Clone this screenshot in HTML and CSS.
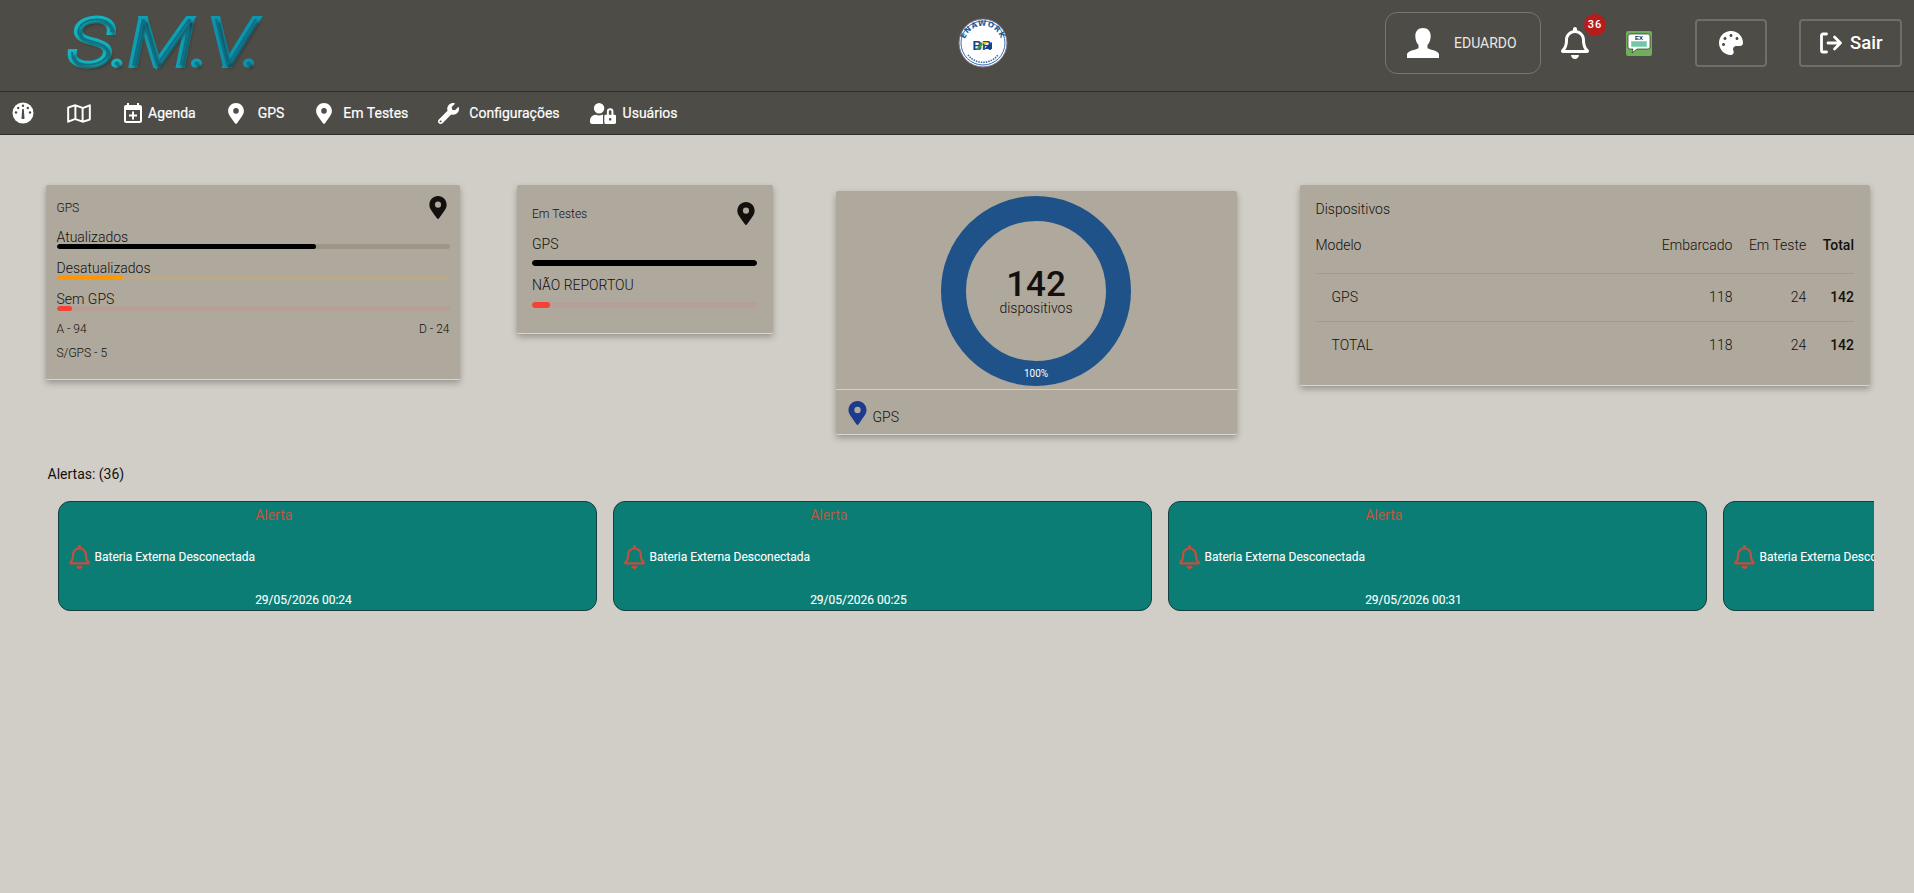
FILE: index.html
```html
<!DOCTYPE html>
<html lang="pt-BR">
<head>
<meta charset="utf-8">
<title>S.M.V.</title>
<link rel="stylesheet" href="styles.css">
</head>
<body>
<svg class="sprites" width="0" height="0" aria-hidden="true">
  <symbol id="pin" viewBox="0 0 384 512"><path fill-rule="evenodd" d="M172.268 501.67C26.97 291.031 0 268.413 0 192 0 85.961 85.961 0 192 0s192 85.961 192 192c0 76.413-26.97 99.031-172.268 309.67-9.535 13.774-29.93 13.773-39.464 0zM192 124a68 68 0 1 0 0 136 68 68 0 0 0 0-136z"/></symbol>
  <symbol id="bell" viewBox="0 0 448 512"><path d="M439.39 362.29c-19.32-20.76-55.47-51.99-55.47-154.29 0-77.7-54.48-139.9-127.94-155.16V32c0-17.67-14.32-32-31.98-32s-31.98 14.33-31.98 32v20.84C118.56 68.1 64.08 130.3 64.08 208c0 102.3-36.15 133.53-55.47 154.29-6 6.45-8.66 14.16-8.61 21.71.11 16.4 12.98 32 32.1 32h383.8c19.12 0 32-15.6 32.1-32 .05-7.55-2.61-15.27-8.61-21.71zM67.53 368c21.22-27.97 44.42-74.33 44.53-159.42 0-.2-.06-.38-.06-.58 0-61.86 50.14-112 112-112s112 50.14 112 112c0 .2-.06.38-.06.58.11 85.1 23.31 131.46 44.53 159.42H67.53zM224 512c35.32 0 63.97-28.65 63.97-64H160.03c0 35.35 28.65 64 63.97 64z"/></symbol>
</svg>

<header class="topbar">
  <div class="logo"><span class="l1">S.</span><span class="l2">M.</span><span class="l3">V.</span></div>
  <svg class="brand" viewBox="0 0 50 50" aria-label="Enawork">
    <circle cx="25" cy="25" r="24" fill="#fff" stroke="#7d6f86" stroke-width="1"/>
    <circle cx="25" cy="25" r="22" fill="none" stroke="#2f6fb0" stroke-width="1"/>
    <path id="arc" d="M6.500 30A18.800 18.800 0 1 1 43.500 30" fill="none"/>
    <text class="brand-arc"><textPath href="#arc" startOffset="50%" text-anchor="middle">ENAWORK</textPath></text>
    <text x="24" y="32" class="brand-br">BR</text>
    <path d="M26 31l8-7v7z" fill="#17428c"/>
    <path d="M18 32l5-8 2 2-4 6z" fill="#2f9a3f"/>
    <path d="M24 24l3 3 3-3z" fill="#e8c52a"/>
    <path d="M10 37a19 19 0 0 0 30 0" fill="none" stroke="#2f6fb0" stroke-width="1.600" stroke-dasharray="1.500 1"/>
  </svg>
  <div class="top-actions">
    <div class="user-box">
      <svg class="user-icon" viewBox="0 0 32 30" fill="#fff"><path d="M16 0c5 0 7.700 3.300 7.700 8 0 3.500-1.100 6.800-3.200 9v3.200c2.800 1.600 11.500 2.600 11.500 6.300V30H0v-3.500c0-3.700 8.700-4.700 11.500-6.300V17c-2.100-2.200-3.200-5.500-3.200-9 0-4.700 2.700-8 7.700-8z"/></svg>
      <span>EDUARDO</span>
    </div>
    <div class="notify">
      <svg class="bell-top" fill="#fff"><use href="#bell"/></svg>
      <span class="badge">36</span>
    </div>
    <svg class="chat-app" viewBox="0 0 26 25">
      <rect width="26" height="25" rx="2" fill="#6fae5a"/>
      <path d="M4 3h18a2 2 0 0 1 2 2v11a2 2 0 0 1-2 2H11l-5 4 1-4H4a2 2 0 0 1-2-2V5a2 2 0 0 1 2-2z" fill="#fff" stroke="#25331f" stroke-width=".7"/>
      <text x="13" y="9" class="chat-ex">EX</text>
      <rect x="5" y="10" width="16" height="6" fill="#8fd8b8"/>
      <path d="M7 11v4M9 11v4M11 11v4M13 11v4M15 11v4M17 11v4M19 11v4" stroke="#3d9c78" stroke-width=".6"/>
    </svg>
    <button class="outline-btn palette-btn" type="button">
      <svg class="palette" viewBox="0 0 512 512" fill="#fff"><path d="M204.3 5C104.9 24.4 24.8 104.3 5.2 203.4c-37 187 131.7 326.4 258.8 306.7 41.2-6.4 61.4-54.6 42.5-91.7-23.100-45.4 9.900-98.400 60.900-98.400h79.700c35.800 0 64.800-29.600 64.900-65.300C511.500 97.100 368.100-26.900 204.300 5zM96 320c-17.700 0-32-14.300-32-32s14.300-32 32-32 32 14.300 32 32-14.300 32-32 32zm32-128c-17.700 0-32-14.300-32-32s14.300-32 32-32 32 14.300 32 32-14.300 32-32 32zm128-64c-17.700 0-32-14.300-32-32s14.300-32 32-32 32 14.300 32 32-14.300 32-32 32zm128 64c-17.700 0-32-14.300-32-32s14.300-32 32-32 32 14.300 32 32-14.300 32-32 32z"/></svg>
    </button>
    <button class="outline-btn exit-btn" type="button">
      <svg class="exit" viewBox="0 0 24 24" fill="none" stroke="#fff" stroke-width="2.800" stroke-linecap="round" stroke-linejoin="round"><path d="M8 3H4.500A1.500 1.500 0 0 0 3 4.500v15A1.500 1.500 0 0 0 4.500 21H8"/><path d="M9.500 12H22M16 6l6 6-6 6"/></svg>
      <span>Sair</span>
    </button>
  </div>
</header>

<nav class="navbar">
  <a class="nav-item nav-dash"><svg class="ni-dash" viewBox="0 0 22 22"><circle cx="11" cy="11" r="10.500" fill="#fff"/><g fill="#4d4c46"><circle cx="11" cy="3.800" r="1.200"/><circle cx="6.200" cy="6" r="1.200"/><circle cx="15.800" cy="6" r="1.200"/><circle cx="4" cy="10.500" r="1.200"/><circle cx="18" cy="10.500" r="1.200"/><path d="M10.200 7h1.600l.6 8a1.500 1.500 0 1 1-2.800 0z"/></g></svg></a>
  <a class="nav-item nav-map"><svg class="ni-map" viewBox="0 0 576 512" fill="#fff"><path d="M560.020 32c-1.960 0-3.980.370-5.960 1.160L384.010 96H384L212 35.280A64.252 64.252 0 0 0 191.760 32c-6.690 0-13.370 1.050-19.810 3.140L20.120 87.950A32.006 32.006 0 0 0 0 117.660v346.320C0 473.170 7.530 480 15.990 480c1.960 0 3.970-.370 5.960-1.160L192 416l172 60.710a63.980 63.980 0 0 0 40.050.150l151.830-52.810A31.996 31.996 0 0 0 576 394.340V48.020c0-9.190-7.530-16.020-15.980-16.020zM224 90.420l128 45.190v285.970l-128-45.190V90.420zM48 418.050V129.070l128-44.530v286.200l-.640.230L48 418.050zm480-35.130l-128 44.530V141.260l.640-.240L528 93.950v288.970z"/></svg></a>
  <a class="nav-item nav-agenda"><svg class="ni-cal" viewBox="3 1 18 20" fill="#fff"><path d="M19 19V8H5V19H19M16 1H18V3H19C20.110 3 21 3.900 21 5V19C21 20.110 20.110 21 19 21H5C3.890 21 3 20.100 3 19V5C3 3.890 3.900 3 5 3H6V1H8V3H16V1M11 9.500H13V12.500H16V14.500H13V17.500H11V14.500H8V12.500H11V9.500Z"/></svg><span>Agenda</span></a>
  <a class="nav-item nav-gps"><svg class="ni-pin" fill="#fff"><use href="#pin"/></svg><span>GPS</span></a>
  <a class="nav-item nav-test"><svg class="ni-pin" fill="#fff"><use href="#pin"/></svg><span>Em Testes</span></a>
  <a class="nav-item nav-conf"><svg class="ni-wrench" viewBox="0 0 512 512" fill="#fff"><path d="M507.730 109.100c-2.240-9.030-13.540-12.090-20.120-5.510l-74.360 74.360-67.880-11.310-11.310-67.880 74.360-74.360c6.620-6.620 3.430-17.900-5.660-20.160-47.380-11.740-99.550.910-136.580 37.930-39.640 39.640-50.550 97.100-34.050 147.200L18.740 402.760c-24.990 24.990-24.990 65.510 0 90.500 24.990 24.990 65.510 24.990 90.500 0l213.210-213.210c50.120 16.710 107.470 5.680 147.370-34.220 37.070-37.070 49.700-89.320 37.910-136.730zM64 472c-13.250 0-24-10.750-24-24 0-13.260 10.750-24 24-24s24 10.740 24 24c0 13.250-10.750 24-24 24z"/></svg><span>Configurações</span></a>
  <a class="nav-item nav-users"><svg class="ni-lock" viewBox="0 0 640 512" fill="#fff"><path d="M224 256A128 128 0 1 0 96 128a128 128 0 0 0 128 128zm96 64a63.080 63.080 0 0 1 8.100-30.500c-4.800-.500-9.500-1.500-14.500-1.500h-16.700a174.080 174.080 0 0 1-145.800 0h-16.700A134.430 134.430 0 0 0 0 422.400V464a48 48 0 0 0 48 48h280.900a63.540 63.540 0 0 1-8.900-32zm288-32h-32v-80a80 80 0 0 0-160 0v80h-32a32 32 0 0 0-32 32v160a32 32 0 0 0 32 32h224a32 32 0 0 0 32-32V320a32 32 0 0 0-32-32zM496 432a32 32 0 1 1 32-32 32 32 0 0 1-32 32zm32-144h-64v-80a32 32 0 0 1 64 0z"/></svg><span>Usuários</span></a>
</nav>

<main class="content">
  <section class="cards">
    <article class="card card-gps">
      <div class="card-head"><span class="small">GPS</span><svg class="pin-card" fill="#14100d"><use href="#pin"/></svg></div>
      <div class="metric metric-a"><span>Atualizados</span><div class="track track-black"><i class="fill fill-black" style="width:66%"></i></div></div>
      <div class="metric"><span>Desatualizados</span><div class="track track-orange"><i class="fill fill-orange" style="width:17%"></i></div></div>
      <div class="metric"><span>Sem GPS</span><div class="track track-red"><i class="fill fill-red" style="width:4%"></i></div></div>
      <div class="legend small"><span>A - 94</span><span>D - 24</span></div>
      <div class="legend-2 small">S/GPS - 5</div>
    </article>

    <article class="card card-test">
      <div class="card-head"><span class="small">Em Testes</span><svg class="pin-card" fill="#14100d"><use href="#pin"/></svg></div>
      <div class="test-metric"><span>GPS</span><div class="track track-black"><i class="fill fill-black" style="width:100%"></i></div></div>
      <div class="test-metric test-metric-b"><span>NÃO REPORTOU</span><div class="track track-red"><i class="fill fill-red" style="width:8%"></i></div></div>
    </article>

    <article class="card card-donut">
      <div class="donut-wrap">
        <svg class="donut" viewBox="0 0 190 190">
          <circle cx="95" cy="95" r="82.500" fill="none" stroke="#1f5288" stroke-width="25"/>
          <text x="95" y="100" class="donut-num">142</text>
          <text x="95" y="117" class="donut-label">dispositivos</text>
          <text x="95" y="181" class="donut-pct">100%</text>
        </svg>
      </div>
      <div class="donut-legend"><svg class="pin-legend" fill="#1e3a8f"><use href="#pin"/></svg><span>GPS</span></div>
    </article>

    <article class="card card-table">
      <div class="table-title">Dispositivos</div>
      <table class="devices">
        <thead><tr><th class="col-name">Modelo</th><th>Embarcado</th><th>Em Teste</th><th class="strong">Total</th></tr></thead>
        <tbody>
          <tr><td class="col-name">GPS</td><td>118</td><td>24</td><td class="strong">142</td></tr>
          <tr><td class="col-name">TOTAL</td><td>118</td><td>24</td><td class="strong">142</td></tr>
        </tbody>
      </table>
    </article>
  </section>

  <h2 class="alerts-title">Alertas: (36)</h2>
  <section class="alerts">
    <article class="alert">
      <div class="alert-title">Alerta</div>
      <div class="alert-msg"><svg class="alert-bell"><use href="#bell"/></svg><span>Bateria Externa Desconectada</span></div>
      <div class="alert-date">29/05/2026 00:24</div>
    </article>
    <article class="alert">
      <div class="alert-title">Alerta</div>
      <div class="alert-msg"><svg class="alert-bell"><use href="#bell"/></svg><span>Bateria Externa Desconectada</span></div>
      <div class="alert-date">29/05/2026 00:25</div>
    </article>
    <article class="alert">
      <div class="alert-title">Alerta</div>
      <div class="alert-msg"><svg class="alert-bell"><use href="#bell"/></svg><span>Bateria Externa Desconectada</span></div>
      <div class="alert-date">29/05/2026 00:31</div>
    </article>
    <article class="alert">
      <div class="alert-title">Alerta</div>
      <div class="alert-msg"><svg class="alert-bell"><use href="#bell"/></svg><span>Bateria Externa Desconectada</span></div>
      <div class="alert-date">29/05/2026 00:36</div>
    </article>
  </section>
</main>
</body>
</html>
```

FILE: styles.css
```css
* { box-sizing: border-box; }
html, body { margin: 0; height: 100%; }
body {
  background: #d1cec7;
  color: #14100d;
  font-family: Roboto, "Liberation Sans", sans-serif;
  font-size: 14px;
  overflow: hidden;
}
.sprites { position: absolute; }

/* top bar */
.topbar {
  height: 92px;
  background: #4d4c46;
  border-bottom: 1px solid #2e2e2a;
  display: flex;
  align-items: center;
  padding-bottom: 5px;
  position: relative;
}
.logo {
  margin-left: 69px;
  width: 195px;
  font-family: Roboto, sans-serif;
  font-weight: 100;
  font-style: italic;
  font-size: 65px;
  line-height: 64px;
  color: #0d6f86;
  text-shadow: 2px 3px 3px #1b1f20;
  white-space: nowrap;
  transform: scaleX(1.18);
  transform-origin: left center;
}
.logo span { -webkit-text-stroke: 6px #13b4bf; paint-order: stroke fill; }
.logo .l2 { -webkit-text-stroke-color: #0f9fb4; }
.logo .l3 { -webkit-text-stroke-color: #0d94ae; }
.brand {
  width: 50px;
  height: 50px;
  margin-left: 694px;
}
.brand-arc { font: 700 7.500px "DejaVu Sans", sans-serif; fill: #1c5c9a; letter-spacing: .6px; }
.brand-br { font: 700 13px "Liberation Sans", sans-serif; fill: #17428c; text-anchor: middle; }
.top-actions {
  margin-left: auto;
  padding-right: 12px;
  display: flex;
  align-items: center;
}
.user-box {
  width: 156px;
  height: 62px;
  border: 1px solid #77766f;
  border-radius: 12px;
  display: flex;
  align-items: center;
  padding-left: 21px;
  color: #e8e8e4;
  font-size: 14px;
}
.user-icon { width: 32px; height: 30px; margin-right: 15px; }
.notify { position: relative; width: 28px; height: 32px; margin-left: 20px; }
.bell-top { width: 28px; height: 32px; display: block; }
.badge {
  position: absolute;
  left: 23px;
  top: -13px;
  width: 22px;
  height: 22px;
  border-radius: 50%;
  background: #b71c1c;
  color: #fff;
  font-size: 11px;
  font-weight: 500;
  letter-spacing: 1px;
  line-height: 22px;
  text-align: center;
}
.chat-app { width: 26px; height: 25px; margin-left: 37px; }
.chat-ex { font: 700 6px "Liberation Sans", sans-serif; fill: #222; text-anchor: middle; }
.outline-btn {
  height: 48px;
  background: transparent;
  border: 2px solid #6f6e68;
  border-radius: 4px;
  color: #fff;
  display: flex;
  align-items: center;
  font-family: inherit;
  padding: 0;
}
.palette-btn { width: 72px; margin-left: 43px; justify-content: center; }
.palette { width: 24px; height: 24px; }
.exit-btn { width: 103px; margin-left: 32px; padding-left: 17px; font-size: 18.500px; font-weight: 500; }
.exit { width: 25px; height: 24px; margin-right: 7px; }

/* navigation */
.navbar {
  height: 43px;
  background: #4d4c46;
  border-bottom: 1px solid #2e2e2a;
  display: flex;
  align-items: center;
  padding-left: 12px;
  color: #fff;
  font-weight: 400;
  font-size: 14px;
  -webkit-text-stroke: .2px #fff;
}
.nav-item { display: flex; align-items: center; white-space: nowrap; }
.nav-item span { display: block; }
.ni-dash { width: 22px; height: 22px; }
.ni-map { width: 24px; height: 21px; margin-left: 33px; }
.nav-agenda { margin-left: 33px; }
.ni-cal { width: 18px; height: 20px; margin-right: 6px; }
.nav-gps { margin-left: 32px; }
.ni-pin { width: 16px; height: 21px; margin-right: 14px; }
.nav-test { margin-left: 32px; }
.nav-test .ni-pin { margin-right: 11px; }
.nav-conf { margin-left: 30px; }
.ni-wrench { width: 21px; height: 21px; margin-right: 10px; }
.nav-users { margin-left: 30px; }
.ni-lock { width: 26px; height: 21px; margin-right: 7px; }

/* main content */
.content { padding: 50px 40px 0 46px; }
.cards { display: flex; align-items: flex-start; }
.card {
  background: #afa89c;
  border-bottom: 1px solid #d8d5ce;
  border-radius: 2px;
  box-shadow: 0 3px 6px rgba(0, 0, 0, .28);
  flex: none;
}
.small { font-size: 12px; font-weight: 300; }
.card-head { display: flex; justify-content: space-between; align-items: center; }
.pin-card { width: 18px; height: 23px; display: block; }

.card-gps { width: 413.500px; height: 195px; padding: 11px 10px 0 10.500px; }
.card-gps .card-head { padding-right: 2.500px; }
.metric { font-weight: 300; line-height: 16px; margin-top: 11px; }
.metric-a { margin-top: 10.300px; }
.metric span { display: block; height: 15px; }
.track { height: 5px; border-radius: 3px; overflow: hidden; }
.fill { display: block; height: 100%; border-radius: 3px; }
.track-black { background: #9c9689; }
.fill-black { background: #000; }
.track-orange { background: #bba888; }
.fill-orange { background: #ff9800; }
.track-red { background: #b5a097; }
.fill-red { background: #f44336; }
.legend { display: flex; justify-content: space-between; margin-top: 10px; line-height: 16px; }
.legend-2 { margin-top: 8px; line-height: 16px; }

.card-test { width: 256.500px; height: 149px; margin-left: 57px; padding: 17px 16px 0 15.500px; }
.card-test .card-head { padding-right: 2px; }
.test-metric { font-weight: 300; margin-top: 10.700px; }
.test-metric span { display: block; line-height: 16px; margin-bottom: 8.300px; }
.test-metric-b { margin-top: 10.700px; }
.test-metric-b span { margin-bottom: 9px; }
.card-test .track { height: 6px; }

.card-donut { width: 401.500px; height: 244px; margin-left: 62.500px; margin-top: 6px; }
.donut-wrap { height: 199px; padding-top: 5px; border-bottom: 1px solid #d3cfc8; display: flex; justify-content: center; }
.donut { width: 190px; height: 190px; display: block; }
.donut-num { font: 500 35px Roboto, sans-serif; fill: #14100d; text-anchor: middle; }
.donut-label { font: 300 14px Roboto, sans-serif; fill: #14100d; text-anchor: middle; }
.donut-pct { font: 400 10px Roboto, sans-serif; fill: #fff; text-anchor: middle; }
.donut-legend { display: flex; align-items: center; padding: 11px 0 0 12px; font-weight: 300; }
.pin-legend { width: 19px; height: 24px; margin-right: 6px; }
.donut-legend span { padding-top: 8px; }

.card-table { width: 570.500px; height: 200.500px; margin-left: 62.500px; padding: 16px 16px 0 16px; }
.table-title { font-weight: 300; line-height: 16px; }
.devices { width: 100%; border-collapse: collapse; margin-top: 12px; font-weight: 300; }
.devices th, .devices td { text-align: right; padding: 0 0 0 16.500px; font-weight: 300; white-space: nowrap; }
.devices th { height: 44px; padding-bottom: 12px; border-bottom: 1px solid #a29c90; }
.devices td { height: 48px; }
.devices tbody tr:first-child td { border-bottom: 1px solid #a29c90; }
.devices .col-name { text-align: left; padding-left: 0; width: 100%; }
.devices td.col-name { padding-left: 16px; }
.devices .strong { font-weight: 500; }

/* alerts */
.alerts-title { margin: 30.500px 0 0 1.500px; font-size: 14px; font-weight: 400; line-height: 16px; }
.alerts {
  display: flex;
  gap: 16px;
  margin: 19px 0 0 11.500px;
  overflow: hidden;
}
.alert {
  flex: none;
  width: 539px;
  height: 110px;
  background: #0b7d75;
  border: 1px solid #153f3f;
  border-radius: 12px;
  display: grid;
  grid-template-columns: auto 1fr;
  grid-template-rows: 27px 57px 24px;
  padding-left: 10px;
  color: #fff;
  font-size: 12px;
  font-weight: 400;
  -webkit-text-stroke: .1px #fff;
}
.alert-title { grid-column: 2; grid-row: 1; color: #c0553f; -webkit-text-stroke: 0; font-size: 14px; font-weight: 400; align-self: center; }
.alert-msg { grid-column: 1; grid-row: 2; display: flex; align-items: center; }
.alert-bell { width: 21px; height: 24px; margin-right: 5px; fill: #c0503f; }
.alert-date { grid-column: 2; grid-row: 3; align-self: center; padding-top: 5px; }
```
